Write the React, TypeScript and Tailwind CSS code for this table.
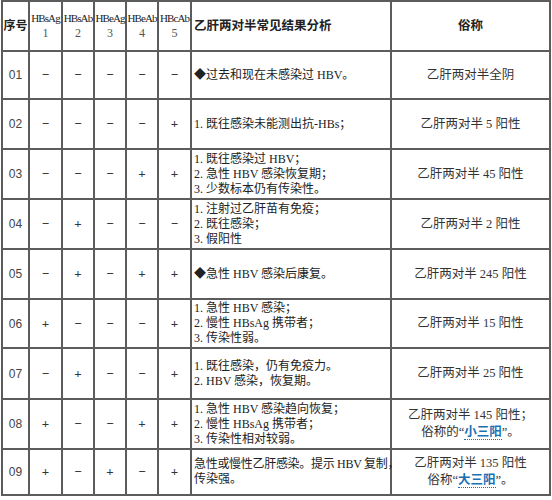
import React from "react";

const font = { fontFamily: '"Liberation Serif", "Noto Sans CJK SC", serif' };

type Row = {
  id: string;
  marks: string[];
  desc: React.ReactNode;
  name: React.ReactNode;
  h: string;
};

const M = "−";
const P = "+";

const rows: Row[] = [
  { id: "01", marks: [M, M, M, M, M], desc: <span>◆过去和现在未感染过 HBV。</span>, name: "乙肝两对半全阴", h: "h-[48px]" },
  { id: "02", marks: [M, M, M, M, P], desc: <span>1. 既往感染未能测出抗-HBs；</span>, name: "乙肝两对半 5 阳性", h: "h-[50px]" },
  {
    id: "03",
    marks: [M, M, M, P, P],
    desc: (
      <>
        <div>1. 既往感染过 HBV；</div>
        <div>2. 急性 HBV 感染恢复期；</div>
        <div>3. 少数标本仍有传染性。</div>
      </>
    ),
    name: "乙肝两对半 45 阳性",
    h: "h-[50px]",
  },
  {
    id: "04",
    marks: [M, P, M, M, M],
    desc: (
      <>
        <div>1. 注射过乙肝苗有免疫；</div>
        <div>2. 既往感染；</div>
        <div>3. 假阳性</div>
      </>
    ),
    name: "乙肝两对半 2 阳性",
    h: "h-[50px]",
  },
  { id: "05", marks: [M, P, M, P, P], desc: <span>◆急性 HBV 感染后康复。</span>, name: "乙肝两对半 245 阳性", h: "h-[50px]" },
  {
    id: "06",
    marks: [P, M, M, M, P],
    desc: (
      <>
        <div>1. 急性 HBV 感染；</div>
        <div>2. 慢性 HBsAg 携带者；</div>
        <div>3. 传染性弱。</div>
      </>
    ),
    name: "乙肝两对半 15 阳性",
    h: "h-[49px]",
  },
  {
    id: "07",
    marks: [M, P, M, M, P],
    desc: (
      <>
        <div>1. 既往感染，仍有免疫力。</div>
        <div>2. HBV 感染，恢复期。</div>
      </>
    ),
    name: "乙肝两对半 25 阳性",
    h: "h-[51px]",
  },
  {
    id: "08",
    marks: [P, M, M, P, P],
    desc: (
      <>
        <div>1. 急性 HBV 感染趋向恢复；</div>
        <div>2. 慢性 HBsAg 携带者；</div>
        <div>3. 传染性相对较弱。</div>
      </>
    ),
    name: (
      <>
        <div>乙肝两对半 145 阳性；</div>
        <div>
          俗称的“<span className="text-[#1b6fb5] font-bold border-b border-dotted border-[#1b6fb5]">小三阳</span>”。
        </div>
      </>
    ),
    h: "h-[50px]",
  },
  {
    id: "09",
    marks: [P, M, P, M, P],
    desc: (
      <>
        <div className="whitespace-nowrap tracking-[-0.3px]">急性或慢性乙肝感染。提示 HBV 复制，</div>
        <div>传染强。</div>
      </>
    ),
    name: (
      <>
        <div>乙肝两对半 135 阳性</div>
        <div>
          俗称“<span className="text-[#1b6fb5] font-bold border-b border-dotted border-[#1b6fb5]">大三阳</span>”。
        </div>
      </>
    ),
    h: "h-[46px]",
  },
];

const cell = "border-2 border-[#5c5c5c] p-0";

export default function App() {
  return (
    <div className="w-[552px] h-[500px] bg-white overflow-hidden text-[#222]" style={font}>
      <table className="table-fixed border-collapse w-[548px] ml-px">
        <colgroup>
          <col className="w-[27px]" />
          <col className="w-[33px]" />
          <col className="w-[32px]" />
          <col className="w-[32px]" />
          <col className="w-[32px]" />
          <col className="w-[33px]" />
          <col className="w-[200px]" />
          <col className="w-[159px]" />
        </colgroup>
        <thead>
          <tr className="h-[50px]">
            <th className={`${cell} text-[12px] font-bold text-center`}>序号</th>
            {["HBsAg", "HBsAb", "HBeAg", "HBeAb", "HBcAb"].map((t, i) => (
              <th key={t} className={`${cell} text-center font-normal`}>
                <div className="text-[11px] leading-[15px] whitespace-nowrap tracking-[-0.9px]">{t}</div>
                <div className="text-[12px] leading-[15px] text-[#555]">{i + 1}</div>
              </th>
            ))}
            <th className={`${cell} text-left pl-[2px] text-[12.5px] font-bold`}>乙肝两对半常见结果分析</th>
            <th className={`${cell} text-center text-[12.5px] font-bold`}>俗称</th>
          </tr>
        </thead>
        <tbody>
          {rows.map((r) => (
            <tr key={r.id} className={r.h}>
              <td className={`${cell} text-center text-[12px] text-[#444]`} style={{ fontFamily: '"Liberation Sans", sans-serif' }}>
                {r.id}
              </td>
              {r.marks.map((m, i) => (
                <td key={i} className={`${cell} text-center text-[13px] font-bold text-[#333]`}>
                  {m}
                </td>
              ))}
              <td className={`${cell} pl-[2px] text-[12px] leading-[15px] align-middle`}>{r.desc}</td>
              <td className={`${cell} text-center text-[12.5px] leading-[17px] text-[#333]`}>{r.name}</td>
            </tr>
          ))}
        </tbody>
      </table>
    </div>
  );
}
